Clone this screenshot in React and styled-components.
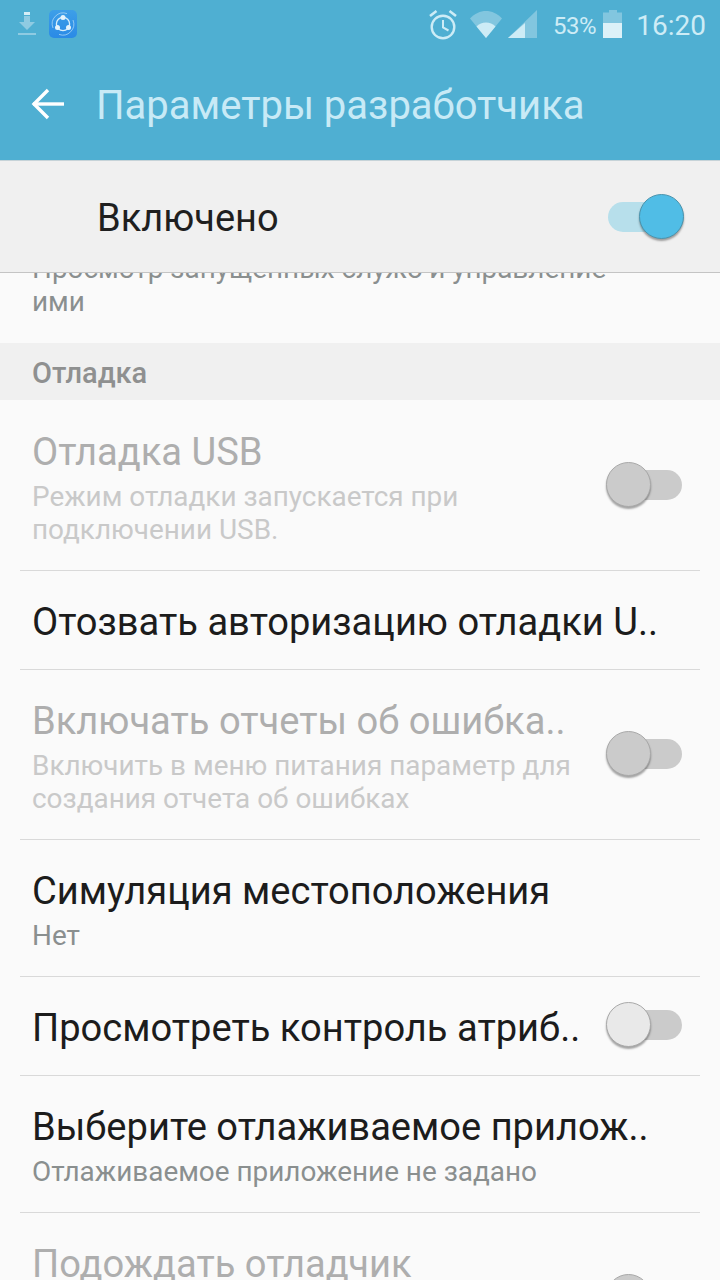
import React from "react";
import styled, { createGlobalStyle } from "styled-components";

const Global = createGlobalStyle`
  html, body {
    margin: 0;
    padding: 0;
    background: #fafafa;
  }
  * {
    box-sizing: border-box;
  }
`;

const Screen = styled.div`
  width: 720px;
  height: 1280px;
  display: flex;
  flex-direction: column;
  overflow: hidden;
  font-family: Roboto, "Noto Sans", sans-serif;
  background: #fafafa;
`;

const Header = styled.header`
  height: 160px;
  flex: none;
  background: #4fafd2;
  display: flex;
  flex-direction: column;
`;

const StatusBar = styled.div`
  height: 50px;
  display: flex;
  align-items: center;
  justify-content: space-between;
  padding: 0 14px 2px 18px;
  color: #cdecf6;
`;

const StatusGroup = styled.div`
  display: flex;
  align-items: center;
`;

const Battery = styled.span`
  font-size: 24px;
  margin: 3px 7px 0 16px;
  letter-spacing: -0.4px;
`;

const Clock = styled.span`
  font-size: 28px;
  margin: 2px 0 0 14px;
`;

const AppBar = styled.div`
  flex: 1;
  display: flex;
  align-items: center;
  padding: 0 0 2px 30px;
`;

const Title = styled.h1`
  margin: 4px 0 0 30px;
  font-size: 40px;
  font-weight: 400;
  line-height: 46px;
  color: #c8eaf6;
`;

const MasterBar = styled.div`
  height: 113px;
  flex: none;
  position: relative;
  z-index: 1;
  display: flex;
  align-items: center;
  justify-content: space-between;
  padding: 0 38px 0 97px;
  background: #f0f0f0;
  border-top: 1px solid #c6d3d8;
  border-bottom: 1px solid #c4c4c4;
`;

const MasterLabel = styled.span`
  font-size: 38px;
  margin-top: 2px;
  color: #1f1f1f;
`;

const List = styled.div`
  flex: 1;
  min-height: 0;
  overflow: hidden;
`;

const ClippedNote = styled.div`
  margin-top: -21px;
  padding: 0 90px 25px 32px;
  font-size: 27.9px;
  line-height: 33px;
  color: #8a8f8f;
`;

const SectionHead = styled.div`
  height: 57px;
  margin-bottom: 1px;
  display: flex;
  align-items: center;
  padding: 2px 0 0 32px;
  background: #f0f0f0;
  font-size: 29px;
  font-weight: 500;
  color: #8f9090;
`;

const Row = styled.div`
  min-height: ${(p) => (p.$tall ? "170px" : "99px")};
  margin: 0 20px;
  padding: 0 18px 2px 12px;
  display: flex;
  align-items: center;
  justify-content: space-between;
  gap: 20px;
  border-bottom: 1px solid #d9d9d9;
`;

const RowText = styled.div`
  min-width: 0;
  flex: 1;
  align-self: flex-start;
  display: flex;
  flex-direction: column;
  gap: 7px;
  padding: ${(p) => (p.$sub ? "30px 0 22px" : "30px 0 0")};
`;

const RowTitle = styled.div`
  font-size: 38.1px;
  line-height: 42px;
  white-space: nowrap;
  color: ${(p) => (p.$off ? "#aeaeae" : "#1c1c1c")};
`;

const RowSub = styled.div`
  font-size: 27.9px;
  line-height: 33px;
  color: ${(p) => (p.$off ? "#c9c9c9" : "#8a8f8f")};
`;

const Toggle = styled.div`
  position: relative;
  flex: none;
  width: 74px;
  height: 30px;
  border-radius: 15px;
  background: ${(p) => (p.$on ? "#b7dfeb" : "#cbcbcb")};
`;

const Knob = styled.span`
  position: absolute;
  top: -8px;
  left: ${(p) => (p.$on ? "31px" : "-2px")};
  width: 45px;
  height: 45px;
  border-radius: 50%;
  background: ${(p) => (p.$on ? "#50bde6" : p.$light ? "#e9e9e9" : "#cbcbcb")};
  border: 1px solid ${(p) => (p.$on ? "#4a94ae" : "#a9a9a9")};
  box-shadow: 0 2px 2px rgba(0, 0, 0, 0.35);
`;

const Icon = styled.svg`
  display: block;
  flex: none;
`;

const DownloadIcon = () => (
  <Icon width="18" height="24" viewBox="0 0 18 24" fill="#8fcbe2">
    <rect x="6" y="0" width="6" height="3" fill="#d5eef7" />
    <path d="M6 4h6v6h5l-8 8-8-8h5z" />
    <rect x="0" y="21" width="18" height="2" />
  </Icon>
);

const ShareLogo = () => (
  <Icon width="28" height="28" viewBox="0 0 28 28" style={{ marginLeft: 13 }}>
    <defs>
      <linearGradient id="share" x1="0" y1="0" x2="0" y2="1">
        <stop offset="0" stopColor="#3d9fe8" />
        <stop offset="1" stopColor="#2a8ae6" />
      </linearGradient>
    </defs>
    <rect width="28" height="28" rx="5" fill="url(#share)" />
    <path d="M4 18A11 11 0 0 1 18 3.6" fill="none" stroke="#a9d6f5" strokeWidth="0.8" />
    <path d="M24 10A11 11 0 0 1 10 24.4" fill="none" stroke="#a9d6f5" strokeWidth="0.8" />
    <circle cx="14" cy="14" r="6.6" fill="none" stroke="#d8eefb" strokeWidth="1.3" />
    <circle cx="14" cy="7.6" r="2.5" fill="#e4f3fc" />
    <circle cx="8.5" cy="17.4" r="2.5" fill="#e4f3fc" />
    <circle cx="19.5" cy="17.4" r="2.5" fill="#e4f3fc" />
  </Icon>
);

const AlarmIcon = () => (
  <Icon width="28" height="31" viewBox="0 0 28 31" fill="none" stroke="#cdecf6">
    <circle cx="14" cy="18" r="11.3" strokeWidth="2.4" />
    <path d="M14 11V18.5L19.5 21.5" strokeWidth="2" />
    <path d="M1 7L7.5 2M27 7L20.5 2" strokeWidth="2.6" />
  </Icon>
);

const WifiIcon = () => (
  <Icon width="32" height="28" viewBox="0 0 32 28" style={{ marginLeft: 13 }}>
    <path d="M0 8.5C9 -1.5 23 -1.5 32 8.5L16 28z" fill="#82c6df" />
    <path d="M6.5 16.5C11.5 11 20.5 11 25.5 16.5L16 28z" fill="#cdecf6" />
  </Icon>
);

const SignalIcon = () => (
  <Icon width="29" height="28" viewBox="0 0 29 28" style={{ marginLeft: 6 }}>
    <path d="M29 0V28H0z" fill="#82c6df" />
    <path d="M17 13V28H0z" fill="#cdecf6" />
  </Icon>
);

const BatteryIcon = () => (
  <Icon width="19" height="28" viewBox="0 0 19 28">
    <path d="M6 0H14V2.5H19V28H0V2.5H6z" fill="#82c6df" />
    <rect x="0" y="13" width="19" height="15" fill="#dcf1f8" />
  </Icon>
);

const BackIcon = () => (
  <Icon width="36" height="32" viewBox="0 0 36 32" fill="none" stroke="#fff" strokeWidth="3.4">
    <path d="M3 16H34" />
    <path d="M18 2L4 16L18 30" />
  </Icon>
);

const Switch = ({ on, light }) => (
  <Toggle $on={on}>
    <Knob $on={on} $light={light} />
  </Toggle>
);

const rows = [
  {
    title: "Отладка USB",
    sub: "Режим отладки запускается при подключении USB.",
    off: true,
    toggle: true,
  },
  { title: "Отозвать авторизацию отладки U.." },
  {
    title: "Включать отчеты об ошибка..",
    sub: "Включить в меню питания параметр для создания отчета об ошибках",
    off: true,
    toggle: true,
  },
  { title: "Симуляция местоположения", sub: "Нет" },
  { title: "Просмотреть контроль атриб..", toggle: true, light: true },
  { title: "Выберите отлаживаемое прилож..", sub: "Отлаживаемое приложение не задано" },
  { title: "Подождать отладчик", off: true, toggle: true, tall: true },
];

const App = () => (
  <Screen>
    <Global />
    <Header>
      <StatusBar>
        <StatusGroup>
          <DownloadIcon />
          <ShareLogo />
        </StatusGroup>
        <StatusGroup>
          <AlarmIcon />
          <WifiIcon />
          <SignalIcon />
          <Battery>53%</Battery>
          <BatteryIcon />
          <Clock>16:20</Clock>
        </StatusGroup>
      </StatusBar>
      <AppBar>
        <BackIcon />
        <Title>Параметры разработчика</Title>
      </AppBar>
    </Header>
    <MasterBar>
      <MasterLabel>Включено</MasterLabel>
      <Switch on />
    </MasterBar>
    <List>
      <ClippedNote>Просмотр запущенных служб и управление ими</ClippedNote>
      <SectionHead>Отладка</SectionHead>
      {rows.map((row) => (
        <Row key={row.title} $tall={row.tall}>
          <RowText $sub={!!row.sub || row.tall}>
            <RowTitle $off={row.off}>{row.title}</RowTitle>
            {row.sub && <RowSub $off={row.off}>{row.sub}</RowSub>}
          </RowText>
          {row.toggle && <Switch light={row.light} />}
        </Row>
      ))}
    </List>
  </Screen>
);

export default App;
